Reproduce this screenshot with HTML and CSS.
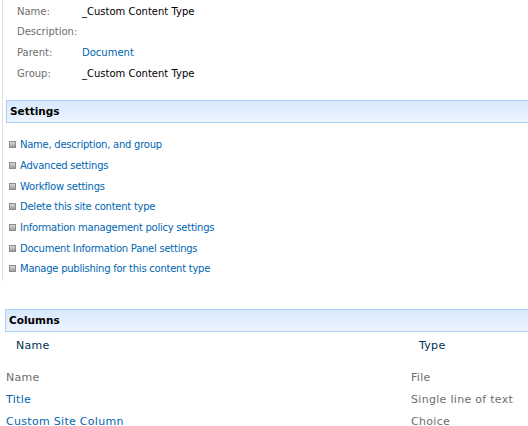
FILE: index.html
```html
<!DOCTYPE html>
<html>
<head>
<meta charset="utf-8">
<link rel="stylesheet" href="styles.css">
</head>
<body>
<div class="page">
  <div class="upper">
    <div class="props">
      <div class="prop"><span class="label">Name:</span><span class="value">_Custom Content Type</span></div>
      <div class="prop"><span class="label">Description:</span><span class="value"></span></div>
      <div class="prop"><span class="label">Parent:</span><a class="value link">Document</a></div>
      <div class="prop"><span class="label">Group:</span><span class="value">_Custom Content Type</span></div>
    </div>
    <div class="section-head">Settings</div>
    <ul class="settings">
      <li><a class="link">Name, description, and group</a></li>
      <li><a class="link">Advanced settings</a></li>
      <li><a class="link">Workflow settings</a></li>
      <li><a class="link">Delete this site content type</a></li>
      <li><a class="link">Information management policy settings</a></li>
      <li><a class="link">Document Information Panel settings</a></li>
      <li><a class="link">Manage publishing for this content type</a></li>
    </ul>
  </div>
  <div class="section-head columns-head">Columns</div>
  <div class="col-header"><span class="c-name">Name</span><span class="c-type">Type</span></div>
  <div class="rows">
    <div class="row"><span class="r-name gray">Name</span><span class="r-type">File</span></div>
    <div class="row"><a class="r-name link">Title</a><span class="r-type">Single line of text</span></div>
    <div class="row"><a class="r-name link">Custom Site Column</a><span class="r-type">Choice</span></div>
  </div>
</div>
</body>
</html>
```
FILE: styles.css
```css
html, body {
  margin: 0;
  padding: 0;
  background: #ffffff;
  overflow: hidden;
}
body {
  font-family: "DejaVu Sans", Verdana, sans-serif;
  font-size: 10px;
  color: #000;
  width: 528px;
  height: 426px;
}
.page {
  padding-left: 2px;
}
.upper {
  border-left: 1px solid #e0e0e0;
  padding-bottom: 2px;
}
.props {
  padding-top: 1px;
  padding-left: 14px;
}
.prop {
  display: flex;
  height: 20.6px;
  align-items: center;
}
.label {
  width: 65px;
  color: #6d6d6d;
}
.value {
  color: #000;
}
.link {
  color: #0066b3;
  text-decoration: none;
}
.section-head {
  margin: 17px 0 0 3px;
  height: 21px;
  border-top: 1px solid #a9d0fb;
  border-bottom: 1px solid #a9d0fb;
  border-left: 1px solid #a9d0fb;
  background: linear-gradient(#d8e8fd, #edf4ff);
  font-weight: bold;
  font-size: 10.5px;
  line-height: 21px;
  padding-left: 3px;
}
.settings {
  list-style: none;
  margin: 11px 0 0 0;
  padding: 0 0 0 6px;
  letter-spacing: -0.25px;
}
.settings li {
  display: flex;
  align-items: center;
  height: 20.7px;
}
.settings li::before {
  content: "";
  width: 5px;
  height: 5px;
  background: linear-gradient(#d9d9d9, #9c9c9c);
  border: 1px solid #8c8c8c;
  margin-right: 4px;
  flex: none;
}
.columns-head {
  margin-top: 28px;
}
.col-header {
  display: flex;
  height: 27px;
  align-items: center;
  color: #00304e;
  padding-left: 14px;
  font-size: 11px;
  letter-spacing: 0.3px;
}
.c-name { width: 403px; }
.rows {
  padding-top: 7px;
  padding-left: 4px;
  font-size: 11px;
  letter-spacing: 0.3px;
}
.row {
  display: flex;
  height: 22px;
  align-items: center;
}
.r-name { width: 405px; }
.gray { color: #6d6d6d; }
.r-type { color: #6d6d6d; }
```
